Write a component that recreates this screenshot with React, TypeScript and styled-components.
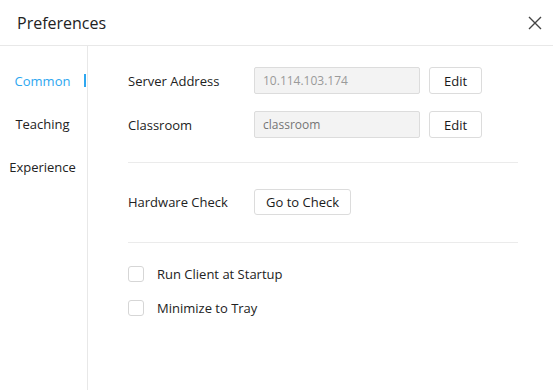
import styled, { createGlobalStyle } from 'styled-components'

const GlobalStyle = createGlobalStyle`
  html, body {
    margin: 0;
    padding: 0;
    background: #ffffff;
  }
  body {
    font-family: 'Open Sans', 'Noto Sans', Arial, sans-serif;
    color: #333333;
  }
`

const Window = styled.div({
  width: '553px',
  height: '390px',
  display: 'flex',
  flexDirection: 'column',
  background: '#ffffff',
  overflow: 'hidden'
})

const Header = styled.div({
  height: '45px',
  display: 'flex',
  alignItems: 'center',
  justifyContent: 'space-between',
  padding: '0 8px 0 17px',
  borderBottom: '1px solid #e8e8e8',
  flexShrink: 0
})

const Title = styled.div({
  fontSize: '16px',
  color: '#222222'
})

const CloseButton = styled.button({
  width: '20px',
  height: '20px',
  padding: 0,
  border: 'none',
  background: 'transparent',
  display: 'flex',
  alignItems: 'center',
  justifyContent: 'center',
  cursor: 'pointer'
})

const Body = styled.div({
  flex: 1,
  display: 'flex'
})

const Sidebar = styled.div({
  width: '88px',
  flexShrink: 0,
  borderRight: '1px solid #e8e8e8',
  padding: '13px 2px 0 0',
  boxSizing: 'border-box',
  display: 'flex',
  flexDirection: 'column'
})

const NavItem = styled.div<{ $active?: boolean }>`
  position: relative;
  height: 43px;
  display: flex;
  align-items: center;
  justify-content: center;
  font-size: 13px;
  color: ${(p) => (p.$active ? '#2ea7f0' : '#222222')};
  cursor: pointer;

  &::after {
    content: '';
    display: ${(p) => (p.$active ? 'block' : 'none')};
    position: absolute;
    right: -1px;
    top: 15px;
    width: 2px;
    height: 13px;
    background: #2ea7f0;
  }
`

const Content = styled.div({
  flex: 1,
  padding: '21px 0 0 40px',
  display: 'flex',
  flexDirection: 'column'
})

const Section = styled.div({
  display: 'flex',
  flexDirection: 'column',
  gap: '17px'
})

const Row = styled.div({
  display: 'flex',
  alignItems: 'center'
})

const Label = styled.div({
  width: '126px',
  fontSize: '13px',
  color: '#222222'
})

const Input = styled.input({
  width: '166px',
  height: '27px',
  boxSizing: 'border-box',
  border: '1px solid #dcdcdc',
  background: '#f3f3f3',
  borderRadius: '2px',
  padding: '0 8px',
  fontFamily: 'inherit',
  fontSize: '12px',
  color: '#9a9a9a',
  marginRight: '9px',
  outline: 'none'
})

const Button = styled.button<{ $height?: number }>`
  height: ${(p) => p.$height ?? 27}px;
  box-sizing: border-box;
  padding: 0 11px;
  min-width: 53px;
  border: 1px solid #dcdcdc;
  border-radius: 3px;
  background: #ffffff;
  font-family: inherit;
  font-size: 13px;
  color: #1a1a1a;
  cursor: pointer;
`

const Divider = styled.div<{ $top: number; $bottom: number }>`
  width: 390px;
  height: 1px;
  background: #ebebeb;
  margin-top: ${(p) => p.$top}px;
  margin-bottom: ${(p) => p.$bottom}px;
`

const CheckList = styled.div({
  display: 'flex',
  flexDirection: 'column',
  gap: '18px'
})

const CheckRow = styled.label({
  display: 'flex',
  alignItems: 'center',
  gap: '13px',
  fontSize: '13px',
  color: '#222222',
  height: '16px',
  cursor: 'pointer'
})

const CheckBox = styled.span({
  width: '16px',
  height: '16px',
  boxSizing: 'border-box',
  border: '1px solid #d6d6d6',
  borderRadius: '3px',
  background: '#ffffff',
  flexShrink: 0
})

const App = () => {
  return (
    <Window>
      <GlobalStyle />
      <Header>
        <Title>Preferences</Title>
        <CloseButton aria-label="Close">
          <svg width="14" height="14" viewBox="0 0 14 14">
            <path d="M1 1L13 13M13 1L1 13" stroke="#444444" strokeWidth="1.4" fill="none" />
          </svg>
        </CloseButton>
      </Header>
      <Body>
        <Sidebar>
          <NavItem $active>Common</NavItem>
          <NavItem>Teaching</NavItem>
          <NavItem>Experience</NavItem>
        </Sidebar>
        <Content>
          <Section>
            <Row>
              <Label>Server Address</Label>
              <Input readOnly value="10.114.103.174" />
              <Button>Edit</Button>
            </Row>
            <Row>
              <Label>Classroom</Label>
              <Input readOnly placeholder="classroom" />
              <Button>Edit</Button>
            </Row>
          </Section>
          <Divider $top={24} $bottom={26} />
          <Row>
            <Label>Hardware Check</Label>
            <Button $height={26}>Go to Check</Button>
          </Row>
          <Divider $top={27} $bottom={23} />
          <CheckList>
            <CheckRow>
              <CheckBox />
              Run Client at Startup
            </CheckRow>
            <CheckRow>
              <CheckBox />
              Minimize to Tray
            </CheckRow>
          </CheckList>
        </Content>
      </Body>
    </Window>
  )
}

export default App
